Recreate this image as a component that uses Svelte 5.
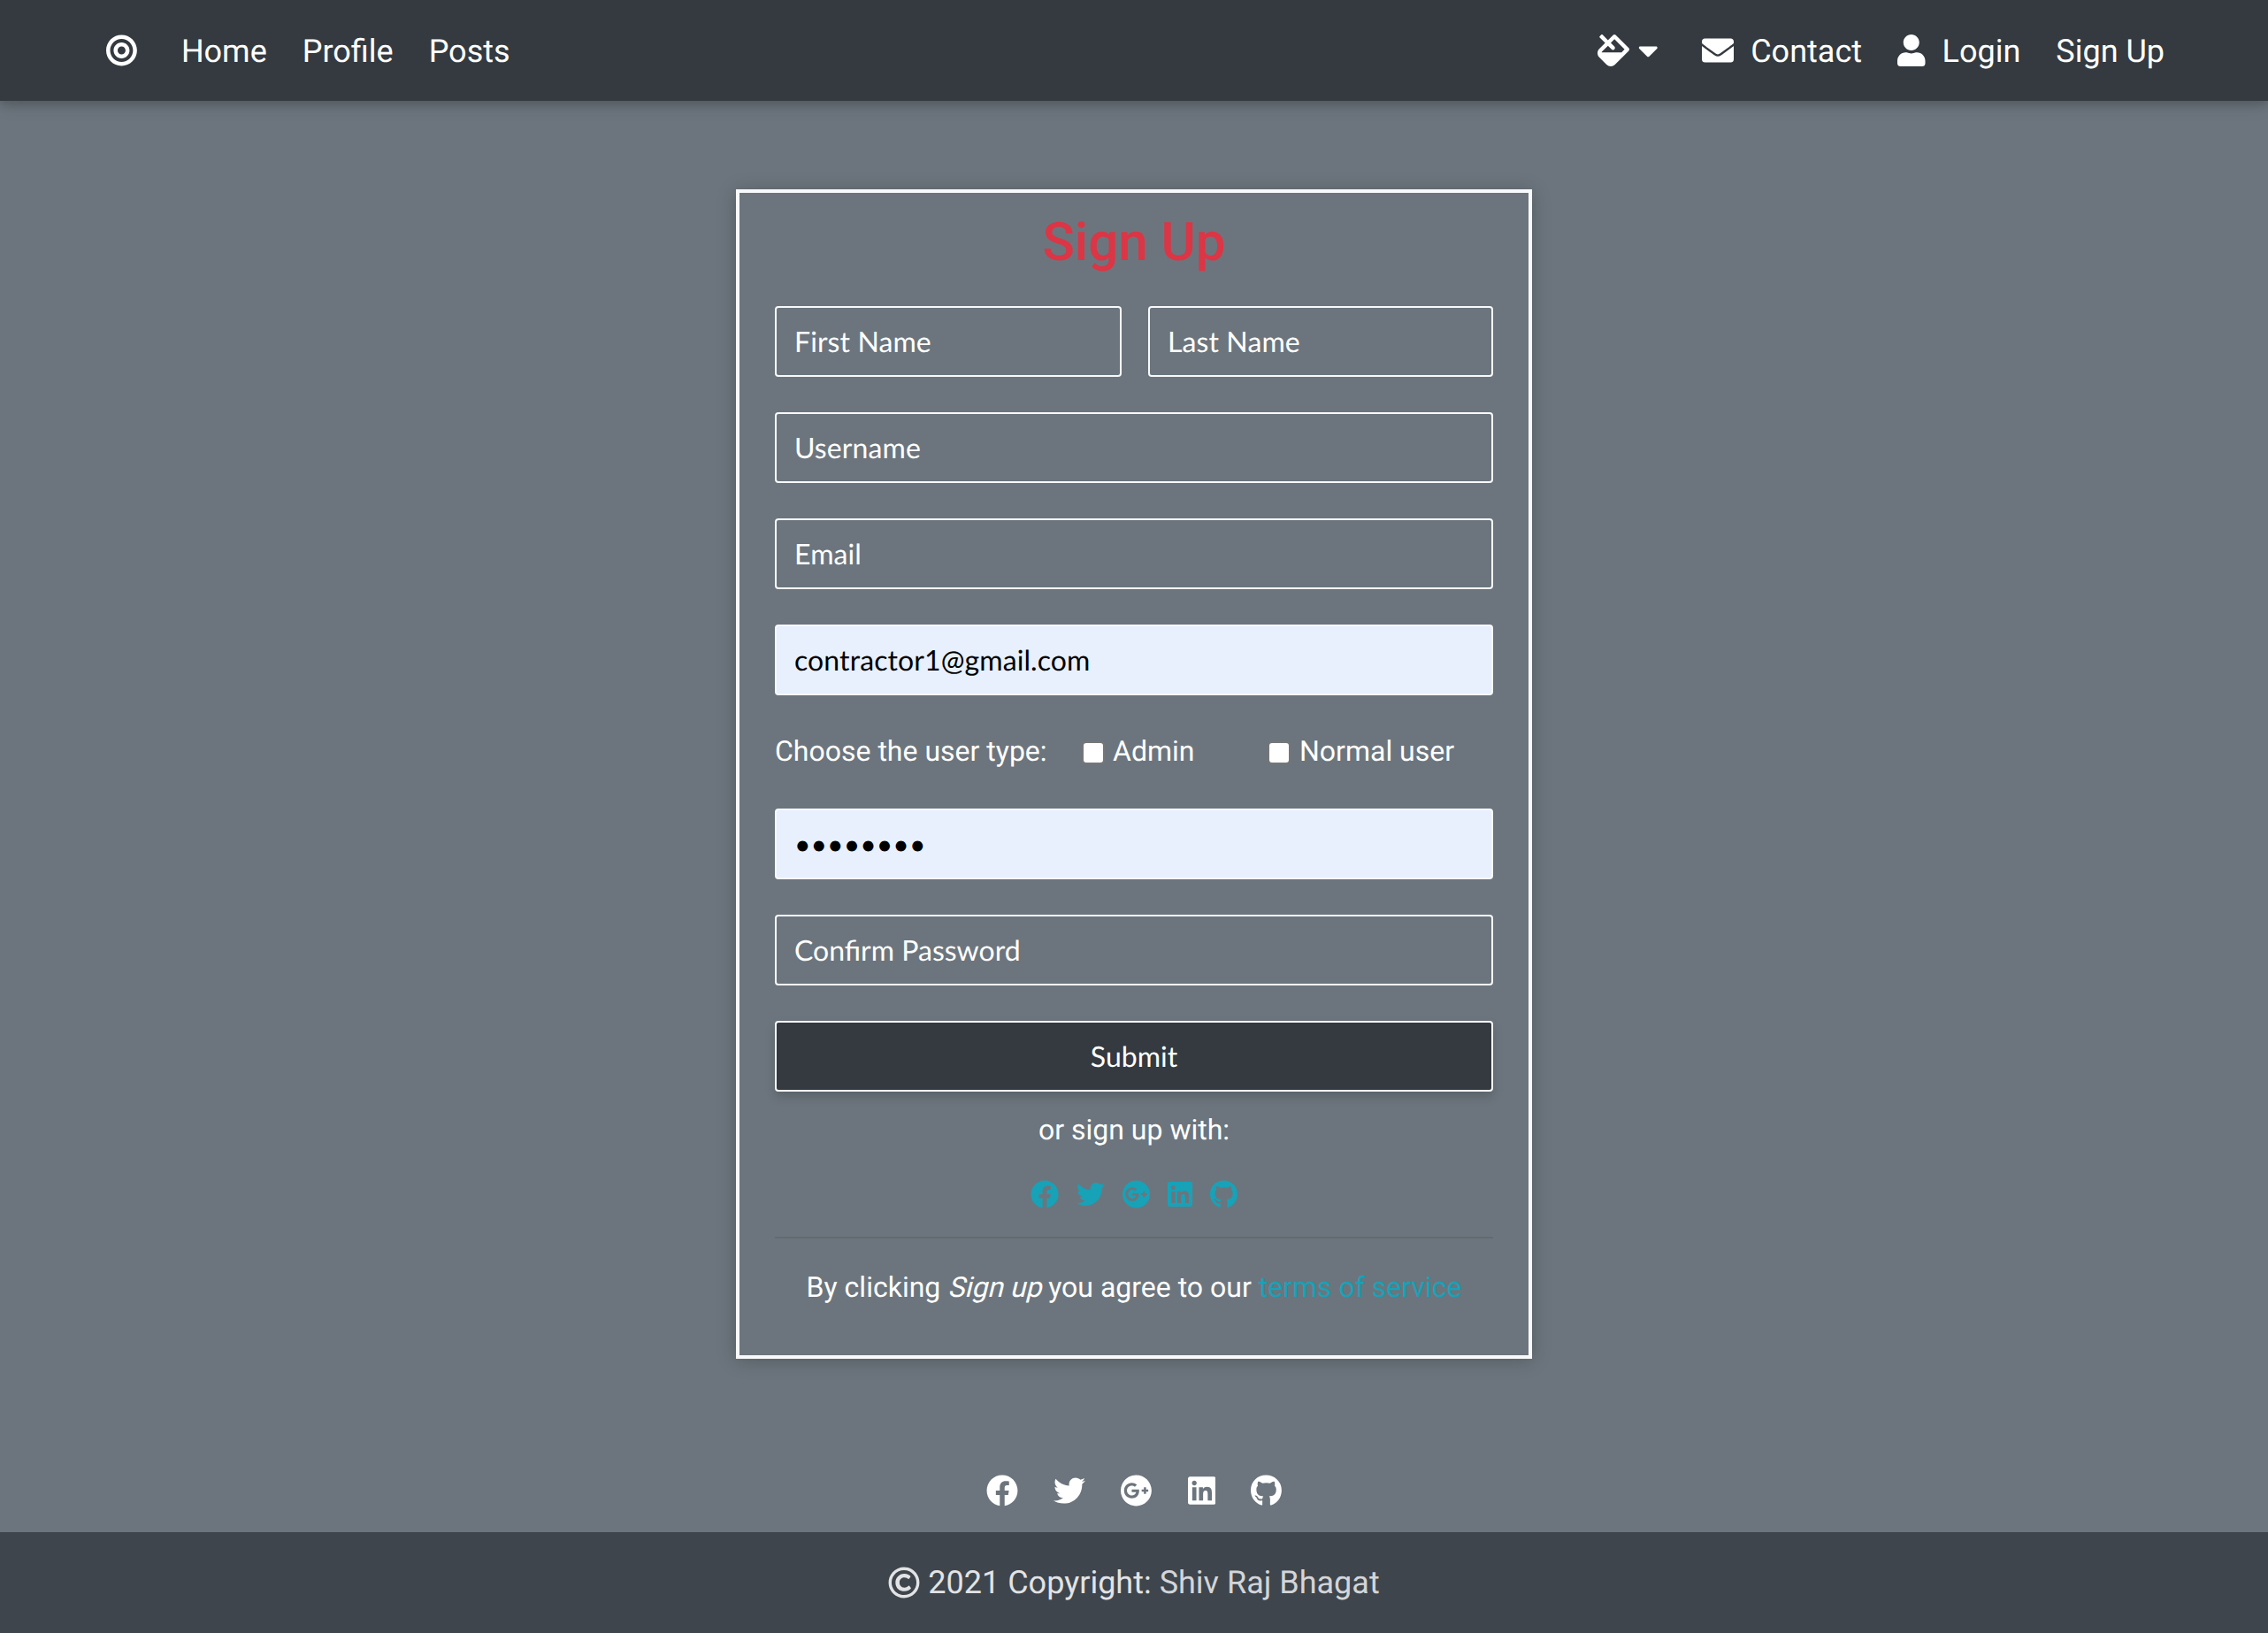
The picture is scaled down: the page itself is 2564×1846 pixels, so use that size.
<script>
  const icons = {
    facebook: { w: 512, d: 'M504 256C504 119 393 8 256 8S8 119 8 256c0 123.78 90.69 226.38 209.25 245V327.69h-63V256h63v-54.64c0-62.15 37-96.48 93.67-96.48 27.14 0 55.52 4.84 55.52 4.84v61h-31.28c-30.8 0-40.41 19.12-40.41 38.73V256h68.78l-11 71.69h-57.78V501C413.31 482.38 504 379.78 504 256z' },
    twitter: { w: 512, d: 'M459.37 151.716c.325 4.548.325 9.097.325 13.645 0 138.72-105.583 298.558-298.558 298.558-59.452 0-114.68-17.219-161.137-47.106 8.447.974 16.568 1.299 25.34 1.299 49.055 0 94.213-16.568 130.274-44.832-46.132-.975-84.792-31.188-98.112-72.772 6.498.974 12.995 1.624 19.818 1.624 9.421 0 18.843-1.3 27.614-3.573-48.081-9.747-84.143-51.98-84.143-102.985v-1.299c13.969 7.797 30.214 12.67 47.431 13.319-28.264-18.843-46.781-51.005-46.781-87.391 0-19.492 5.197-37.36 14.294-52.954 51.655 63.675 129.3 105.258 216.365 109.807-1.624-7.797-2.599-15.918-2.599-24.04 0-57.828 46.782-104.934 104.934-104.934 30.213 0 57.502 12.67 76.67 33.137 23.715-4.548 46.456-13.32 66.599-25.34-7.798 24.366-24.366 44.833-46.132 57.827 21.117-2.273 41.584-8.122 60.426-16.243-14.292 20.791-32.161 39.308-52.628 54.253z' },
    google: { w: 496, d: 'M248 8C111.1 8 0 119.1 0 256s111.1 248 248 248 248-111.1 248-248S384.9 8 248 8zm-70.7 372c-68.8 0-124-55.5-124-124s55.2-124 124-124c31.3 0 60.1 11 83 32.3l-33.6 32.6c-13.2-12.9-31.3-19.1-49.4-19.1-42.9 0-77.2 35.5-77.2 78.1s34.2 78.1 77.2 78.1c32.6 0 64.9-19.1 70.1-53.3h-70.1v-42.6h116.9c1.3 6.8 1.9 13.6 1.9 20.7 0 70.8-47.5 121.2-118.8 121.2zm230.2-106.2v35.5H372v-35.5h-35.5v-35.5H372v-35.5h35.5v35.5h35.2v35.5h-35.2z' },
    linkedin: { w: 448, d: 'M416 32H31.9C14.3 32 0 46.5 0 64.3v383.4C0 465.5 14.3 480 31.9 480H416c17.6 0 32-14.5 32-32.3V64.3c0-17.8-14.4-32.3-32-32.3zM135.4 416H69V202.2h66.5V416zm-33.2-243c-21.3 0-38.5-17.3-38.5-38.5S80.9 96 102.2 96c21.2 0 38.5 17.3 38.5 38.5 0 21.3-17.2 38.5-38.5 38.5zm282.1 243h-66.4V312c0-24.8-.5-56.7-34.5-56.7-34.6 0-39.9 27-39.9 54.9V416h-66.4V202.2h63.7v29.2h.9c8.9-16.8 30.6-34.5 62.9-34.5 67.2 0 79.7 44.3 79.7 101.9V416z' },
    github: { w: 496, d: 'M165.9 397.4c0 2-2.3 3.6-5.2 3.6-3.3.3-5.6-1.3-5.6-3.6 0-2 2.3-3.6 5.2-3.6 3-.3 5.6 1.3 5.6 3.6zm-31.1-4.5c-.7 2 1.3 4.3 4.3 4.9 2.6 1 5.6 0 6.2-2s-1.3-4.3-4.3-5.2c-2.6-.7-5.5.3-6.2 2.3zm44.2-1.7c-2.9.7-4.9 2.6-4.6 4.9.3 2 2.9 3.3 5.9 2.6 2.9-.7 4.9-2.6 4.6-4.6-.3-1.9-3-3.2-5.9-2.9zM244.8 8C106.1 8 0 113.3 0 252c0 110.9 69.8 205.8 169.5 239.2 12.8 2.3 17.3-5.6 17.3-12.1 0-6.2-.3-40.4-.3-61.4 0 0-70 15-84.7-29.8 0 0-11.4-29.1-27.8-36.6 0 0-22.9-15.7 1.6-15.4 0 0 24.9 2 38.6 25.8 21.9 38.6 58.6 27.5 72.9 20.9 2.3-16 8.8-27.1 16-33.7-55.9-6.2-112.3-14.3-112.3-110.5 0-27.5 7.6-41.3 23.6-58.9-2.6-6.5-11.1-33.3 2.6-67.9 20.9-6.5 69 27 69 27 20-5.6 41.5-8.5 62.8-8.5s42.8 2.9 62.8 8.5c0 0 48.1-33.6 69-27 13.7 34.7 5.2 61.4 2.6 67.9 16 17.7 25.8 31.5 25.8 58.9 0 96.5-58.9 104.2-114.8 110.5 9.2 7.9 17 22.9 17 46.4 0 33.7-.3 75.4-.3 83.6 0 6.5 4.6 14.4 17.3 12.1C428.2 457.8 496 362.9 496 252 496 113.3 383.5 8 244.8 8z' },
    bullseye: { w: 496, d: 'M248 8C111.03 8 0 119.03 0 256s111.03 248 248 248 248-111.03 248-248S384.97 8 248 8zm0 432c-101.69 0-184-82.29-184-184 0-101.69 82.29-184 184-184 101.69 0 184 82.29 184 184 0 101.69-82.29 184-184 184zm0-312c-70.69 0-128 57.31-128 128s57.31 128 128 128 128-57.31 128-128-57.31-128-128-128zm0 192c-35.29 0-64-28.71-64-64s28.71-64 64-64 64 28.71 64 64-28.71 64-64 64z' },
    envelope: { w: 512, d: 'M502.3 190.8c3.9-3.1 9.7-.2 9.7 4.7V400c0 26.5-21.5 48-48 48H48c-26.5 0-48-21.5-48-48V195.6c0-5 5.7-7.8 9.7-4.7 22.4 17.4 52.1 39.5 154.1 113.6 21.1 15.4 56.7 47.8 92.2 47.6 35.7.3 72-32.8 92.3-47.6 102-74.1 131.6-96.3 154-113.7zM256 320c23.2.4 56.6-29.2 73.4-41.4 132.7-96.3 142.8-104.7 173.4-128.7 5.8-4.5 9.2-11.5 9.2-18.9v-19c0-26.5-21.5-48-48-48H48c-26.5 0-48 21.5-48 48v19c0 7.4 3.4 14.3 9.2 18.9 30.6 23.9 40.7 32.4 173.4 128.7 16.8 12.2 50.2 41.8 73.4 41.4z' },
    user: { w: 448, d: 'M224 256c70.7 0 128-57.3 128-128S294.7 0 224 0 96 57.3 96 128s57.3 128 128 128zm89.6 32h-16.7c-22.2 10.2-46.9 16-72.9 16s-50.6-5.8-72.9-16h-16.7C60.2 288 0 348.2 0 422.4V464c0 26.5 21.5 48 48 48h352c26.5 0 48-21.5 48-48v-41.6c0-74.2-60.2-134.4-134.4-134.4z' },
    copyright: { w: 512, d: 'M256 8C119.033 8 8 119.033 8 256s111.033 248 248 248 248-111.033 248-248S392.967 8 256 8zm0 448c-110.532 0-200-89.451-200-200 0-110.531 89.451-200 200-200 110.532 0 200 89.451 200 200 0 110.532-89.451 200-200 200zm107.351-101.064c-9.614 9.712-45.53 41.396-104.065 41.396-82.43 0-140.484-61.425-140.484-141.567 0-79.152 60.275-139.401 139.762-139.401 55.531 0 88.738 26.62 97.593 34.779a11.965 11.965 0 0 1 1.936 15.322l-18.155 28.113c-3.841 5.95-11.966 7.282-17.499 2.921-8.595-6.776-31.814-22.538-61.708-22.538-48.303 0-77.916 35.33-77.916 80.082 0 41.589 26.888 83.692 78.277 83.692 32.657 0 56.843-19.039 65.726-27.225 5.27-4.857 13.596-4.039 17.82 1.738l19.865 27.17a11.947 11.947 0 0 1-1.152 15.518z' },
    fill: { w: 512, d: 'M502.63 217.06L294.94 9.37A31.928 31.928 0 0 0 272.31 0c-8.19 0-16.38 3.12-22.62 9.37l-81.58 81.58L81.93 4.77c-6.24-6.25-16.37-6.25-22.62 0L36.69 27.38c-6.24 6.25-6.24 16.38 0 22.63l86.19 86.18-94.76 94.76c-37.49 37.49-37.49 98.26 0 135.75l117.19 117.19c18.75 18.74 43.31 28.12 67.87 28.12 24.57 0 49.13-9.37 67.88-28.12l221.57-221.57c12.49-12.5 12.49-32.76 0-45.26zM386.83 288H65.93c1.36-3.84 3.57-9.8 7.44-13.67l94.76-94.76 58.18 58.18c12.5 12.5 32.76 12.5 45.26 0 12.49-12.5 12.49-32.76 0-45.26l-58.18-58.18 58.95-58.95 162.44 162.44L386.83 288z' },
    caret: { w: 320, d: 'M31.3 192h257.3c17.8 0 26.7 21.5 14.1 34.1L174.1 354.8c-7.8 7.8-20.5 7.8-28.3 0L17.2 226.1C4.6 213.5 13.5 192 31.3 192z' }
  };
  const social = ['facebook', 'twitter', 'google', 'linkedin', 'github'];
</script>

{#snippet icon(name)}
  <svg class="icon" viewBox="0 0 {icons[name].w} 512" style:width="{icons[name].w / 512}em" aria-hidden="true">
    <path d={icons[name].d} />
  </svg>
{/snippet}

<div class="page">
  <nav>
    <div class="group">
      <a class="brand" href="#home" aria-label="Brand">{@render icon('bullseye')}</a>
      <a href="#home"><span>Home</span></a>
      <a href="#profile"><span>Profile</span></a>
      <a href="#posts"><span>Posts</span></a>
    </div>
    <div class="group">
      <a class="theme" href="#theme" aria-label="Theme">{@render icon('fill')}{@render icon('caret')}</a>
      <a class="contact" href="#contact">{@render icon('envelope')}<span>Contact</span></a>
      <a class="login" href="#login">{@render icon('user')}<span>Login</span></a>
      <a href="#signup"><span>Sign Up</span></a>
    </div>
  </nav>

  <main>
    <form class="card">
      <h1>Sign Up</h1>
      <div class="names">
        <input type="text" placeholder="First Name" />
        <input type="text" placeholder="Last Name" />
      </div>
      <input type="text" placeholder="Username" />
      <input type="text" placeholder="Email" />
      <input class="filled" type="text" value="contractor1@gmail.com" />
      <div class="types">
        <span class="question">Choose the user type:</span>
        <label class="admin"><input type="checkbox" />Admin</label>
        <label class="normal"><input type="checkbox" />Normal user</label>
      </div>
      <input class="filled" type="password" value="password" />
      <input type="password" placeholder="Confirm Password" />
      <button type="button">Submit</button>
      <p class="with">or sign up with:</p>
      <div class="small-social">
        {#each social as name}<a href="#{name}" aria-label={name}>{@render icon(name)}</a>{/each}
      </div>
      <hr />
      <p class="terms">By clicking <em>Sign up</em> you agree to our <a href="#terms">terms of service</a></p>
    </form>
  </main>

  <footer>
    <div class="social">
      {#each social as name}<a href="#{name}" aria-label={name}>{@render icon(name)}</a>{/each}
    </div>
    <div class="copyright">{@render icon('copyright')}<span>2021 Copyright: <a href="#author">Shiv Raj Bhagat</a></span></div>
  </footer>
</div>

<style>
  :global(body) { margin: 0; background: #6c757d; }
  .page {
    box-sizing: border-box;
    display: flex;
    flex-direction: column;
    height: 1846px;
    font: 32px/48px Roboto, sans-serif;
    text-rendering: geometricPrecision;
    color: #fff;
  }
  .page :global(*) { box-sizing: border-box; }
  a { color: inherit; text-decoration: none; }
  .icon { display: block; height: 1em; fill: currentColor; flex: none; }

  nav {
    display: flex;
    justify-content: space-between;
    height: 114px;
    padding: 0 117px 0 120px;
    background: #343a40;
    box-shadow: 0 4px 10px rgba(0, 0, 0, .16), 0 4px 20px rgba(0, 0, 0, .12);
    font-size: 36px;
  }
  .group { display: flex; align-items: center; gap: 40px; }
  .group a { display: flex; align-items: center; }
  .group span { padding-top: 1px; }
  .brand { margin-right: 10px; }
  .theme { gap: 10px; margin-right: 10px; }
  .contact { gap: 19px; }
  .login { gap: 19px; }

  main { flex: 1; padding-top: 100px; }
  .card {
    display: flex;
    flex-direction: column;
    gap: 40px;
    width: 900px;
    height: 1322px;
    margin: 0 auto;
    padding: 20px 40px 0;
    border: 4px solid #f8f9fa;
    box-shadow: 0 2px 20px rgba(0, 0, 0, .22);
  }
  h1 {
    margin: 0 0 -4px;
    font-size: 60px;
    font-weight: 500;
    line-height: 72px;
    text-align: center;
    color: #dc3545;
  }
  .names { display: grid; grid-template-columns: 392px 390px; gap: 30px; }
  input:not([type='checkbox']), button {
    flex: none;
    width: 100%;
    height: 80px;
    margin: 0;
    padding: 0 20px 2px;
    border: 2px solid #f8f9fa;
    border-radius: 4px;
    background: transparent;
    font: 32px Lato, sans-serif;
    text-rendering: geometricPrecision;
    color: #fff;
    outline: 0;
  }
  input[type='text'] { letter-spacing: .1px; }
  input::placeholder { color: #fff; opacity: 1; }
  .card input.filled { background: #e8f0fe; color: #000; }
  .types { display: flex; align-items: center; height: 48px; padding-bottom: 2px; }
  .question { width: 347px; }
  label { display: flex; align-items: center; gap: 9px; }
  .admin { width: 210px; }
  .normal { gap: 10px; }
  input[type='checkbox'] {
    appearance: none;
    width: 26px;
    height: 26px;
    margin: 4px 0 0;
    border: 2px solid #767676;
    border-radius: 5px;
    background: #fff;
  }
  .card button {
    background: #343a40;
    box-shadow: 0 6px 12px rgba(0, 0, 0, .16);
  }
  p { margin: 0; text-align: center; white-space: nowrap; }
  .with { margin: -21px 0 1px; }
  .small-social {
    display: flex;
    justify-content: center;
    gap: 20px;
    margin: -8px 1px 0 0;
    font-size: 32px;
    color: #17a2b8;
  }
  hr { width: 100%; height: 2px; margin: -8px 0 0; border: 0; background: #626a71; }
  .terms { margin-top: -9px; }
  .terms em {
    display: inline-block;
    font-style: normal;
    transform: skewX(-14deg);
    transform-origin: 0 75%;
  }
  .terms a { color: #17a2b8; }

  .social { display: flex; justify-content: center; gap: 40.3px; height: 65px; font-size: 36px; }
  .copyright {
    display: flex;
    align-items: center;
    justify-content: center;
    gap: 9px;
    height: 114px;
    background: #3f454c;
    font-size: 36px;
    color: #e2e3e5;
  }
  .copyright a { color: #d3d5d8; }
</style>
